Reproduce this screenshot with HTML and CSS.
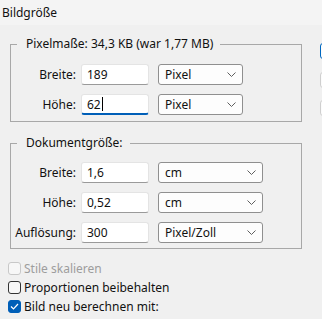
FILE: index.html
```html
<!DOCTYPE html>
<html lang="de">
<head>
    <meta charset="UTF-8">
    <title>Bildgröße</title>
    <link rel="stylesheet" href="styles.css">
</head>
<body>

<div class="titlebar">Bildgröße</div>

<div class="dialog">
    <div class="main">
        <fieldset class="group group-pixel">
            <legend>Pixelmaße: 34,3 KB (war 1,77 MB)</legend>
            <div class="row">
                <span class="label">Breite:</span>
                <div class="field">189</div>
                <div class="select">
                    <span>Pixel</span>
                    <svg width="9" height="5" viewBox="0 0 9 5"><path d="M0.5 0.5 L4.5 4.5 L8.5 0.5" fill="none" stroke="#5f5f5f" stroke-width="1"/></svg>
                </div>
            </div>
            <div class="row">
                <span class="label">Höhe:</span>
                <div class="field focused">62<span class="caret"></span></div>
                <div class="select">
                    <span>Pixel</span>
                    <svg width="9" height="5" viewBox="0 0 9 5"><path d="M0.5 0.5 L4.5 4.5 L8.5 0.5" fill="none" stroke="#5f5f5f" stroke-width="1"/></svg>
                </div>
            </div>
        </fieldset>

        <fieldset class="group group-doc">
            <legend>Dokumentgröße:</legend>
            <div class="row">
                <span class="label">Breite:</span>
                <div class="field">1,6</div>
                <div class="select wide">
                    <span>cm</span>
                    <svg width="9" height="5" viewBox="0 0 9 5"><path d="M0.5 0.5 L4.5 4.5 L8.5 0.5" fill="none" stroke="#5f5f5f" stroke-width="1"/></svg>
                </div>
            </div>
            <div class="row">
                <span class="label">Höhe:</span>
                <div class="field">0,52</div>
                <div class="select wide">
                    <span>cm</span>
                    <svg width="9" height="5" viewBox="0 0 9 5"><path d="M0.5 0.5 L4.5 4.5 L8.5 0.5" fill="none" stroke="#5f5f5f" stroke-width="1"/></svg>
                </div>
            </div>
            <div class="row">
                <span class="label">Auflösung:</span>
                <div class="field">300</div>
                <div class="select wide">
                    <span>Pixel/Zoll</span>
                    <svg width="9" height="5" viewBox="0 0 9 5"><path d="M0.5 0.5 L4.5 4.5 L8.5 0.5" fill="none" stroke="#5f5f5f" stroke-width="1"/></svg>
                </div>
            </div>
        </fieldset>

        <div class="checks">
            <div class="check disabled"><span class="box"></span>Stile skalieren</div>
            <div class="check"><span class="box"></span>Proportionen beibehalten</div>
            <div class="check"><span class="box checked"><svg width="9" height="7" viewBox="0 0 9 7"><path d="M1 3.5 L3.5 6 L8 1" fill="none" stroke="#fff" stroke-width="1.2"/></svg></span>Bild neu berechnen mit:</div>
        </div>
    </div>

    <div class="side">
        <div class="btn default"></div>
        <div class="btn"></div>
        <div class="btn"></div>
    </div>
</div>

</body>
</html>
```

FILE: styles.css
```css
body {
    margin: 0;
    width: 322px;
    height: 319px;
    overflow: hidden;
    background-color: #f0f0f0;
    font-family: "Noto Sans", sans-serif;
    font-size: 12px;
    color: #111;
}

.titlebar {
    height: 25px;
    line-height: 26px;
    padding-left: 2px;
    background-color: #f4f4f4;
}

.dialog {
    display: flex;
}

.main {
    flex: none;
    width: 310px;
    padding-left: 10px;
}

.group {
    width: 292px;
    box-sizing: border-box;
    margin: 11px 0 0 0;
    padding: 12px 0 6px 0;
    border: 1px solid #a8a8a8;
}

.group-doc {
    margin-top: 13px;
    padding: 11px 0 5px 0;
}

.group legend {
    margin-left: 6px;
    padding: 0 7px 0 9px;
    line-height: 16px;
}

.row {
    display: flex;
    align-items: center;
    height: 21px;
    margin-top: 9px;
}

.row:first-of-type {
    margin-top: 0;
}

.label {
    width: 65px;
    margin-right: 5px;
    text-align: right;
}

.field {
    width: 68px;
    height: 21px;
    box-sizing: border-box;
    padding: 0 5px;
    line-height: 19px;
    background-color: #fff;
    border: 1px solid #e4e4e4;
    border-bottom-color: #9a9a9a;
    border-radius: 3px;
    display: flex;
    align-items: center;
}

.field.focused {
    border-bottom: 2px solid #005fb8;
}

.caret {
    display: inline-block;
    width: 1px;
    height: 14px;
    margin-left: 1px;
    background-color: #000;
}

.select {
    width: 85px;
    height: 21px;
    box-sizing: border-box;
    margin-left: 9px;
    padding: 0 6px 0 6px;
    background-color: #fdfdfd;
    border: 1px solid #8f8f8f;
    border-radius: 3px;
    display: flex;
    align-items: center;
    justify-content: space-between;
}

.select.wide {
    width: 105px;
}

.checks {
    margin-top: 10px;
}

.check {
    display: flex;
    align-items: center;
    height: 19px;
}

.box {
    width: 13px;
    height: 13px;
    box-sizing: border-box;
    margin-left: -2px;
    margin-right: 3px;
    border: 1px solid #333;
    border-radius: 3px;
    background-color: #f7f7f7;
    display: flex;
    align-items: center;
    justify-content: center;
}

.check.disabled {
    color: #9d9d9d;
}

.check.disabled .box {
    border-color: #c8c8c8;
}

.box.checked {
    background-color: #005fb8;
    border-color: #005fb8;
}

.side {
    flex: none;
    width: 2px;
    overflow: hidden;
    padding-top: 18px;
}

.btn {
    width: 10px;
    height: 16px;
    box-sizing: border-box;
    border: 1px solid #cfcfcf;
    border-radius: 3px;
    background-color: #fbfbfb;
    margin-bottom: 12px;
}

.btn.default {
    border-color: #0067c0;
    margin-bottom: 13px;
}
```
